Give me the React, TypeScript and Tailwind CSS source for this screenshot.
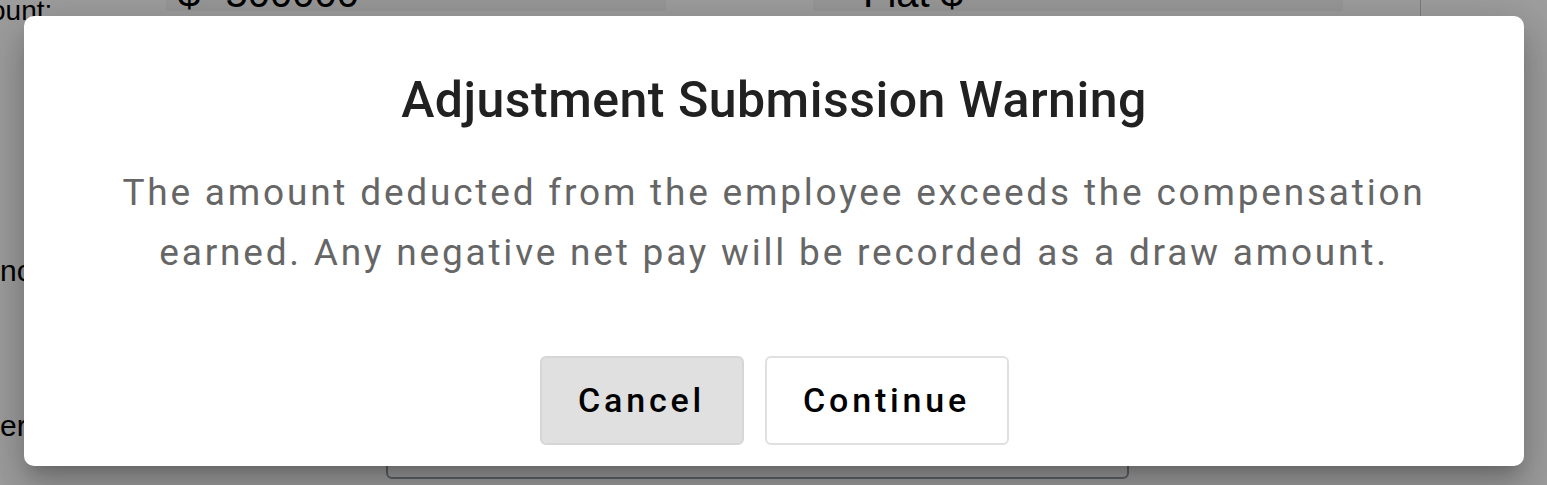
export default function App() {
  return (
    <div
      className="relative h-[485px] w-[1547px] overflow-hidden bg-white"
      style={{ fontFamily: "Roboto, 'Liberation Sans', sans-serif" }}
    >
      {/* page behind the dialog */}
      <div className="flex h-full flex-col" style={{ fontFamily: "'Liberation Sans', Arial, sans-serif" }}>
        <div className="flex h-[38px] items-start">
          <div className="w-[176px] -ml-[10px] pl-0 text-[28px] leading-[28px] text-black -mt-[3px]">ount:</div>
          <div className="flex h-full w-[500px] gap-[12px] bg-[#f6f6f6] pl-[12px] text-[40px] leading-[40px] -mt-[27px] text-black">
            <span>$</span>
            <span>-500000</span>
          </div>
          <div className="h-full w-[147px] bg-white" />
          <div className="h-full w-[530px] bg-[#f6f6f6] pl-[50px] text-[40px] leading-[40px] -mt-[27px] text-black">Flat $</div>
          <div className="h-full w-[77px] bg-white" />
          <div className="h-full w-[1px] bg-[#c8c8c8]" />
          <div className="h-full flex-1 bg-white" />
        </div>
        <div className="mt-[218px] text-[30px] leading-[30px] text-black">nc</div>
        <div className="mt-[125px] text-[30px] leading-[30px] text-black">er</div>
        <div className="ml-[386px] mt-[8px] h-[30px] w-[743px] rounded-b-[6px] border-2 border-[#9aa0a6]" />
      </div>

      {/* backdrop */}
      <div className="absolute inset-0 bg-black/[0.38]" />

      {/* dialog */}
      <div className="absolute left-[24px] top-[16px] flex h-[450px] w-[1500px] flex-col items-center rounded-[10px] bg-white px-[40px] pt-[54px] shadow-[0_11px_15px_-7px_rgba(0,0,0,0.2),0_24px_38px_3px_rgba(0,0,0,0.14),0_9px_46px_8px_rgba(0,0,0,0.12)]">
        <h2 className="text-[50px] font-medium leading-[60px] tracking-[0.5px] text-[#212121]">
          Adjustment Submission Warning
        </h2>
        <p className="mt-[33px] max-w-[1350px] text-center text-[37px] leading-[60px] tracking-[2.8px] text-[#666666]">
          The amount deducted from the employee exceeds the compensation earned. Any negative net pay will be recorded as a draw amount.
        </p>
        <div className="mt-[73px] flex gap-[21px]">
          <button className="h-[89px] w-[204px] rounded-[6px] border-2 border-[#d6d6d6] bg-[#e0e0e0] text-[34px] font-medium tracking-[3.8px] text-black">
            Cancel
          </button>
          <button className="h-[89px] w-[244px] rounded-[6px] border-2 border-[#e0e0e0] bg-white text-[34px] font-medium tracking-[3.8px] text-black">
            Continue
          </button>
        </div>
      </div>
    </div>
  );
}
